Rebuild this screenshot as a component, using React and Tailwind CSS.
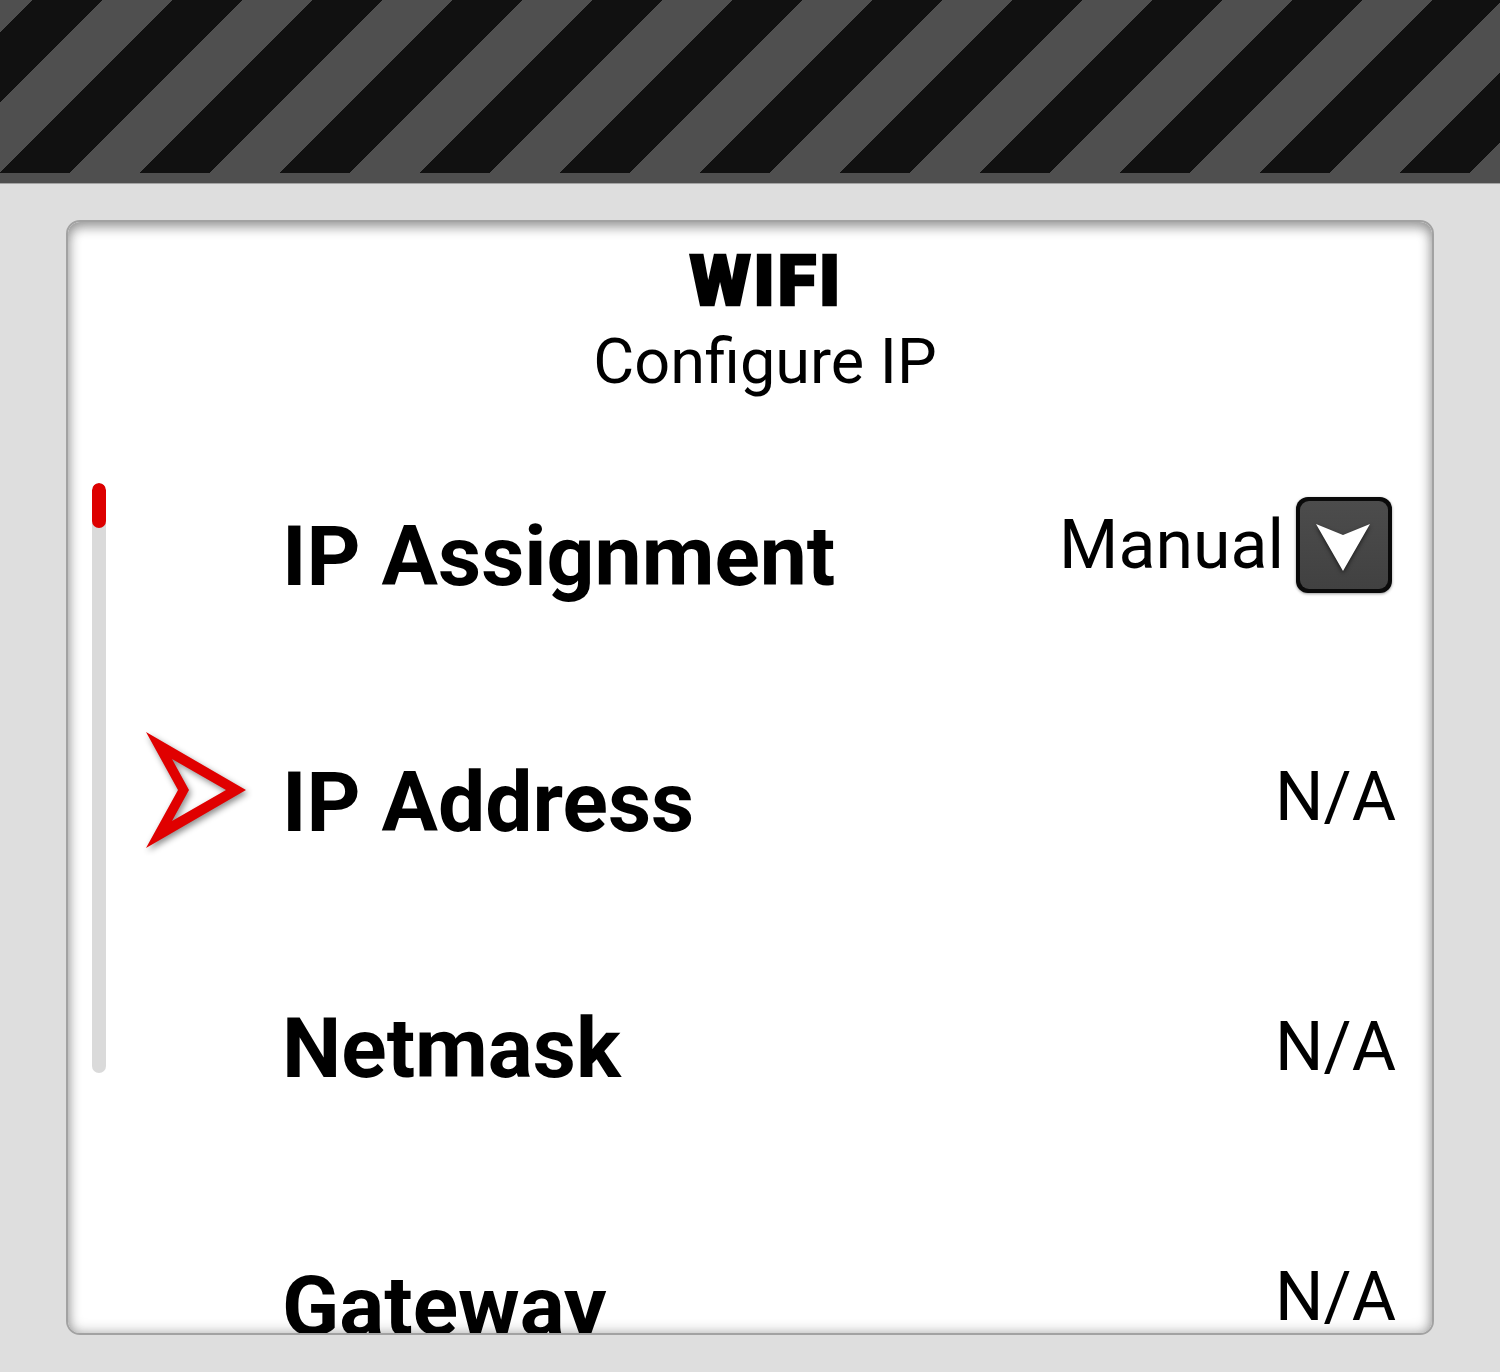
import React from "react";

function Pointer() {
  return (
    <svg
      className="absolute left-[77px] top-[509px] drop-shadow-[2px_3px_3px_rgba(0,0,0,0.45)]"
      width="102"
      height="118"
      viewBox="0 0 102 118"
    >
      <path
        d="M1 1 L101 59 L1 117 L33 59 Z M27 28 L44 59 L27 90 L81 59 Z"
        fill="#e00000"
        fillRule="evenodd"
      />
    </svg>
  );
}

function Dropdown() {
  return (
    <div className="w-[96px] h-[96px] rounded-[12px] bg-[#0a0a0a] p-[4px] shadow-[0_1px_3px_rgba(0,0,0,0.4)]">
      <div className="w-full h-full rounded-[9px] bg-[linear-gradient(180deg,#4c4c4c,#414141)] flex items-center justify-center">
        <svg
          width="60"
          height="52"
          viewBox="0 0 60 52"
          className="drop-shadow-[0_2px_2px_rgba(0,0,0,0.6)] mt-[4px]"
        >
          <path d="M2 3 L29 14 L56 3 L29 50 Z" fill="#ffffff" />
        </svg>
      </div>
    </div>
  );
}

function Row({ label, value, dropdown, labelClass = "", valueClass = "mb-[8px]" }) {
  return (
    <div className="h-[246px] shrink-0 flex items-center justify-between pl-[214px] pr-[36px]">
      <div className={"text-[84px] leading-none font-bold text-black " + labelClass}>
        {label}
      </div>
      {dropdown ? (
        <div className="flex items-center gap-[12px] mb-[24px] mr-[4px]">
          <span className="text-[68px] leading-none text-black">{value}</span>
          <Dropdown />
        </div>
      ) : (
        <span className={"text-[68px] leading-none text-black " + valueClass}>{value}</span>
      )}
    </div>
  );
}

export default function App() {
  return (
    <div
      className="w-[1500px] h-[1372px] bg-[#dedede] flex flex-col overflow-hidden"
      style={{ fontFamily: "Roboto, 'Noto Sans', sans-serif" }}
    >
      <div className="shrink-0">
        <div className="h-[173px] bg-[repeating-linear-gradient(135deg,#4f4f4f_0px,#4f4f4f_23.33px,#111111_23.33px,#111111_72.83px,#4f4f4f_72.83px,#4f4f4f_98.99px)]" />
        <div className="h-[10px] bg-[#4f4f4f]" />
        <div className="h-[1px] bg-[#a3a3a3]" />
      </div>
      <div className="ml-[66px] mt-[36px] w-[1368px] h-[1115px] shrink-0 rounded-[14px] border-2 border-[#a2a2a2] bg-white relative overflow-hidden">
        <div className="flex flex-col">
          <div className="h-[212px] shrink-0 flex flex-col items-center pl-[30px] pt-[24px]">
            <div className="text-[70px] leading-none font-black text-black tracking-[3px] [-webkit-text-stroke:2.5px_black] pl-[3px]">
              WIFI
            </div>
            <div className="text-[63px] leading-none text-black mt-[14px]">Configure IP</div>
          </div>
          <Row label="IP Assignment" value="Manual" dropdown />
          <Row label="IP Address" value="N/A" valueClass="mb-[12px]" />
          <Row label="Netmask" value="N/A" valueClass="mb-[4px]" />
          <Row label="Gateway" value="N/A" labelClass="mt-[24px]" valueClass="mt-[4px]" />
        </div>
        <div className="absolute left-[24px] top-[261px] w-[14px] h-[590px] rounded-full bg-[#dadada] overflow-hidden">
          <div className="h-[45px] w-full rounded-full bg-[#dd0000]" />
        </div>
        <Pointer />
        <div className="absolute inset-0 rounded-[12px] pointer-events-none shadow-[inset_0_6px_12px_rgba(0,0,0,0.26),inset_0_0_14px_rgba(0,0,0,0.3)]" />
      </div>
    </div>
  );
}
